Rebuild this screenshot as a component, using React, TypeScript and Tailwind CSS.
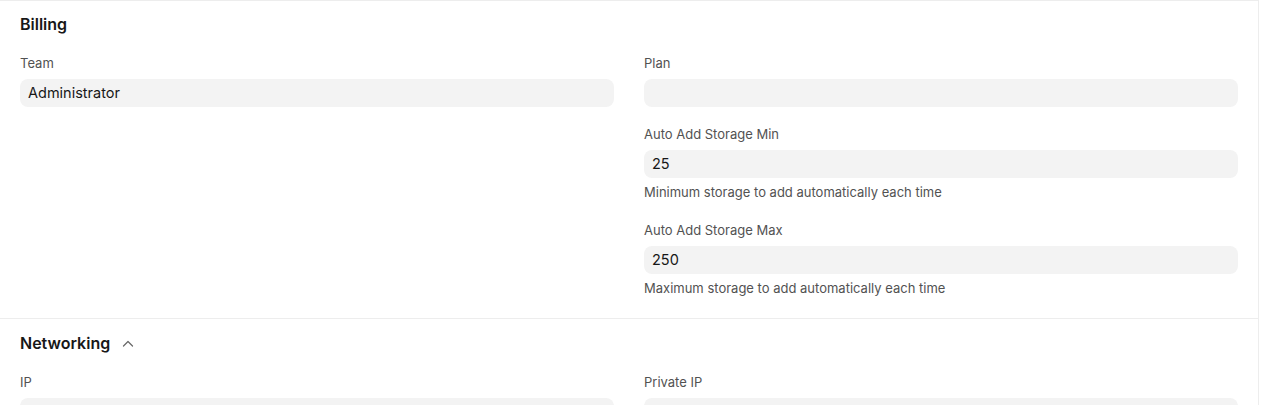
import React from "react";

function Field({
  label,
  value,
  description,
}: {
  label: string;
  value?: string;
  description?: string;
}) {
  return (
    <div className={description ? "mb-[22px]" : "mb-[19px]"}>
      <div className="mb-[8px] text-[13px] leading-4 text-[#525252]">{label}</div>
      <div className="flex h-7 items-center rounded-lg bg-[#f3f3f3] px-2 text-[14.5px] text-[#171717]">
        {value}
      </div>
      {description ? (
        <div className="mt-[6px] text-[13px] leading-4 text-[#525252]">{description}</div>
      ) : null}
    </div>
  );
}

function ChevronUp() {
  return (
    <svg width="14" height="14" viewBox="0 0 14 14" fill="none" className="ml-[11px] mt-[2px]">
      <path d="M2.5 9L7 4.5L11.5 9" stroke="#6b6b6b" strokeWidth="1.3" strokeLinecap="round" strokeLinejoin="round" />
    </svg>
  );
}

export default function App() {
  return (
    <div
      className="h-[405px] w-full overflow-hidden bg-white"
      style={{ fontFamily: "Inter, 'Noto Sans', sans-serif" }}
    >
      <div className="w-[1259px] border-r border-[#ededed]">
        {/* Billing */}
        <section className="border-t border-[#ededed] px-5 pt-[11px]">
          <h2 className="mb-[19px] text-[16px] font-semibold leading-6 text-[#171717]">Billing</h2>
          <div className="grid grid-cols-2 gap-x-[30px]">
            <div>
              <Field label="Team" value="Administrator" />
            </div>
            <div>
              <Field label="Plan" />
              <Field label="Auto Add Storage Min" value="25" description="Minimum storage to add automatically each time" />
              <Field label="Auto Add Storage Max" value="250" description="Maximum storage to add automatically each time" />
            </div>
          </div>
        </section>

        {/* Networking */}
        <section className="border-t border-[#ededed] px-5 pt-[12px]">
          <div className="mb-[19px] flex items-center">
            <h2 className="text-[16px] font-semibold leading-6 text-[#171717]">Networking</h2>
            <ChevronUp />
          </div>
          <div className="grid grid-cols-2 gap-x-[30px]">
            <Field label="IP" />
            <Field label="Private IP" />
          </div>
        </section>
      </div>
    </div>
  );
}
